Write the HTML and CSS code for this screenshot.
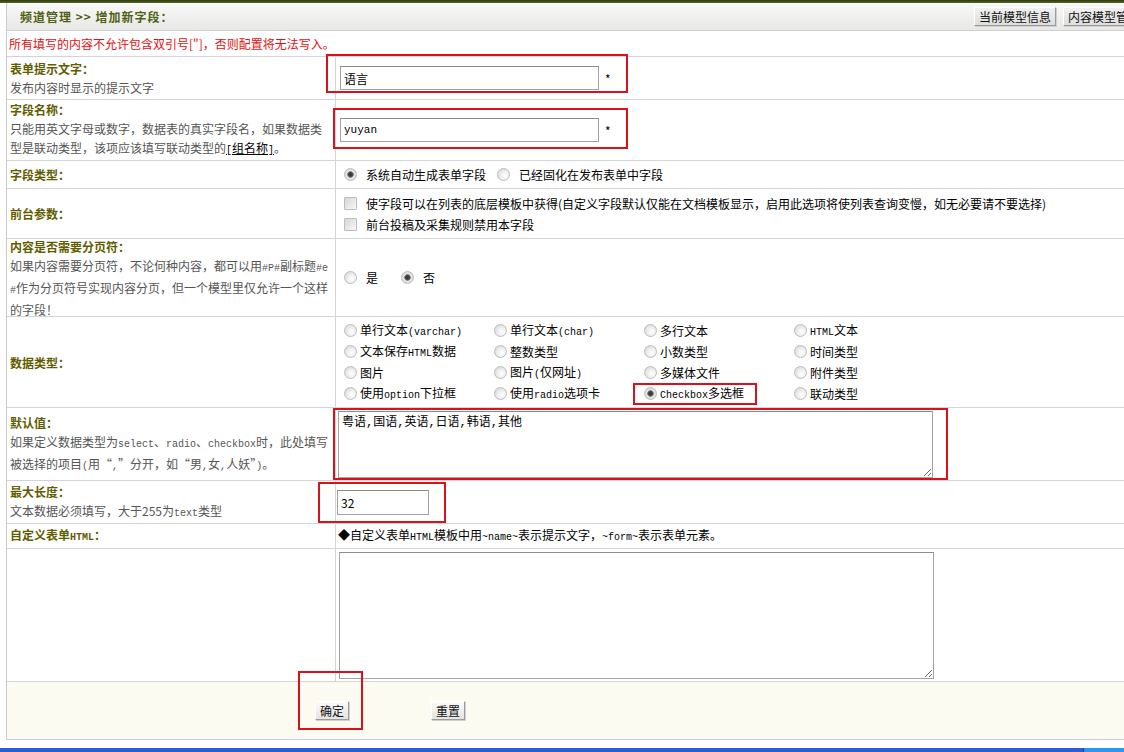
FILE: index.html
```html
<!DOCTYPE html>
<html lang="zh-CN">
<head>
<meta charset="utf-8">
<title>增加新字段</title>
<link rel="stylesheet" href="styles.css">
</head>
<body>
<div class="topbar"></div>
<div class="page">
  <div class="header">
    <div class="title">频道管理 &gt;&gt; 增加新字段：</div>
    <div class="tools">
      <button class="btn tool">当前模型信息</button>
      <button class="btn tool">内容模型管理</button>
    </div>
  </div>
  <div class="notice">所有填写的内容不允许包含双引号["]，否则配置将无法写入。</div>

  <div class="row r1">
    <div class="lc"><div class="lbl">表单提示文字：</div><div class="desc">发布内容时显示的提示文字</div></div>
    <div class="rc"><input class="txt t-name" value="语言"><span class="req">*</span></div>
  </div>

  <div class="row r2">
    <div class="lc"><div class="lbl">字段名称：</div><div class="desc">只能用英文字母或数字，数据表的真实字段名，如果数据类<br>型是联动类型，该项应该填写联动类型的<a class="lnk" href="#"><span class="m">[</span>组名称<span class="m">]</span></a>。</div></div>
    <div class="rc"><input class="txt t-name mono-in" value="yuyan"><span class="req">*</span></div>
  </div>

  <div class="row r3">
    <div class="lc"><div class="lbl">字段类型：</div></div>
    <div class="rc">
      <label class="opt wide"><input type="radio" class="radio" name="ft" checked><span>系统自动生成表单字段</span></label>
      <label class="opt wide second"><input type="radio" class="radio" name="ft"><span>已经固化在发布表单中字段</span></label>
    </div>
  </div>

  <div class="row r4">
    <div class="lc"><div class="lbl">前台参数：</div></div>
    <div class="rc col">
      <label class="chkline"><input type="checkbox" class="chk"><span>使字段可以在列表的底层模板中获得(自定义字段默认仅能在文档模板显示，启用此选项将使列表查询变慢，如无必要请不要选择)</span></label>
      <label class="chkline"><input type="checkbox" class="chk"><span>前台投稿及采集规则禁用本字段</span></label>
    </div>
  </div>

  <div class="row r5">
    <div class="lc"><div class="lbl">内容是否需要分页符：</div><div class="desc">如果内容需要分页符，不论何种内容，都可以用<span class="m">#P#</span>副标题<span class="m">#e</span><br><span class="m">#</span>作为分页符号实现内容分页，但一个模型里仅允许一个这样<br>的字段！</div></div>
    <div class="rc">
      <label class="opt wide"><input type="radio" class="radio" name="pg"><span>是</span></label>
      <label class="opt wide yes"><input type="radio" class="radio" name="pg" checked><span>否</span></label>
    </div>
  </div>

  <div class="row r6">
    <div class="lc"><div class="lbl">数据类型：</div></div>
    <div class="rc">
      <div class="dtypes">
        <label class="opt"><input type="radio" class="radio" name="dt"><span>单行文本<span class="m">(varchar)</span></span></label>
        <label class="opt"><input type="radio" class="radio" name="dt"><span>单行文本<span class="m">(char)</span></span></label>
        <label class="opt"><input type="radio" class="radio" name="dt"><span>多行文本</span></label>
        <label class="opt"><input type="radio" class="radio" name="dt"><span><span class="m">HTML</span>文本</span></label>
        <label class="opt"><input type="radio" class="radio" name="dt"><span>文本保存<span class="m">HTML</span>数据</span></label>
        <label class="opt"><input type="radio" class="radio" name="dt"><span>整数类型</span></label>
        <label class="opt"><input type="radio" class="radio" name="dt"><span>小数类型</span></label>
        <label class="opt"><input type="radio" class="radio" name="dt"><span>时间类型</span></label>
        <label class="opt"><input type="radio" class="radio" name="dt"><span>图片</span></label>
        <label class="opt"><input type="radio" class="radio" name="dt"><span>图片<span class="m">(</span>仅网址<span class="m">)</span></span></label>
        <label class="opt"><input type="radio" class="radio" name="dt"><span>多媒体文件</span></label>
        <label class="opt"><input type="radio" class="radio" name="dt"><span>附件类型</span></label>
        <label class="opt"><input type="radio" class="radio" name="dt"><span>使用<span class="m">option</span>下拉框</span></label>
        <label class="opt"><input type="radio" class="radio" name="dt"><span>使用<span class="m">radio</span>选项卡</span></label>
        <label class="opt"><input type="radio" class="radio" name="dt" checked><span><span class="m">Checkbox</span>多选框</span></label>
        <label class="opt"><input type="radio" class="radio" name="dt"><span>联动类型</span></label>
      </div>
    </div>
  </div>

  <div class="row r7">
    <div class="lc"><div class="lbl">默认值：</div><div class="desc">如果定义数据类型为<span class="m">select</span>、<span class="m">radio</span>、<span class="m">checkbox</span>时，此处填写<br>被选择的项目<span class="m">(</span>用“<span class="m">,</span>”分开，如“男<span class="m">,</span>女<span class="m">,</span>人妖”<span class="m">)</span>。</div></div>
    <div class="rc"><textarea class="area a-def">粤语,国语,英语,日语,韩语,其他</textarea></div>
  </div>

  <div class="row r8">
    <div class="lc"><div class="lbl">最大长度：</div><div class="desc">文本数据必须填写，大于255为<span class="m">text</span>类型</div></div>
    <div class="rc"><input class="txt t-len" value="32"></div>
  </div>

  <div class="row r9">
    <div class="lc"><div class="lbl">自定义表单<span class="mb">HTML</span>：</div></div>
    <div class="rc"><span class="hint">◆自定义表单<span class="m">HTML</span>模板中用<span class="m">~name~</span>表示提示文字，<span class="m">~form~</span>表示表单元素。</span></div>
  </div>

  <div class="row r10">
    <div class="lc"></div>
    <div class="rc"><textarea class="area a-html"></textarea></div>
  </div>

  <div class="footer">
    <button class="btn act">确定</button>
    <button class="btn act reset">重置</button>
  </div>
</div>
<div class="taskbar"></div>

<div class="mark mk1"></div>
<div class="mark mk2"></div>
<div class="mark mk3"></div>
<div class="mark mk4"></div>
<div class="mark mk5"></div>
<div class="mark mk6"></div>
</body>
</html>
```

FILE: styles.css
```css
* { box-sizing: border-box; }
html, body { margin: 0; padding: 0; }
body {
  width: 1124px;
  height: 752px;
  overflow: hidden;
  position: relative;
  background: #fff;
  color: #000;
  font: 12px/19px "Noto Sans CJK SC", "Noto Sans", sans-serif;
}
.m { font-family: "Liberation Mono", monospace; font-size: 10px; }
.mb { font-family: "Liberation Mono", monospace; font-size: 10px; font-weight: bold; }

.topbar { height: 3px; background: linear-gradient(#2c3a0a, #55662a); }

.page { margin-left: 6px; width: 1142px; border-left: 1px solid #cccccc; }

.header {
  height: 28px;
  display: flex;
  align-items: center;
  justify-content: space-between;
  padding: 0 3px 0 13px;
  background: linear-gradient(#f8f8f6, #e8e8e6);
  border-bottom: 1px solid #cfcfcf;
}
.title { font-weight: bold; color: #4f6012; letter-spacing: 1px; }
.tools { display: flex; gap: 7px; }

.btn {
  font: 12px/17px "Noto Sans CJK SC", sans-serif;
  color: #111;
  height: 19px;
  padding: 0;
  background: linear-gradient(#fafafa, #e4e4e2);
  border: 1px solid;
  border-color: #ffffff #9c9c9c #9c9c9c #ffffff;
  box-shadow: 1px 1px 0 #d0d0d0;
}
.tool { width: 82px; background: linear-gradient(#f0f0ee, #dedede); }

.notice {
  height: 26px;
  display: flex;
  align-items: center;
  padding-left: 2px;
  color: #e41010;
  border-bottom: 1px solid #d4d4d4;
}

.row { display: flex; border-bottom: 1px solid #d4d4d4; }
.r1 { height: 43px; }
.r2 { height: 61px; }
.r3 { height: 28px; }
.r4 { height: 50px; }
.r5 { height: 78px; }
.r6 { height: 91px; }
.r7 { height: 73px; }
.r8 { height: 43px; }
.r9 { height: 25px; }
.r10 { height: 133px; }

.lc {
  width: 329px;
  flex: none;
  border-right: 1px solid #d4d4d4;
  padding-left: 3px;
  display: flex;
  flex-direction: column;
  justify-content: center;
}
.lbl { font-weight: bold; color: #5f5d00; }
.desc { color: #555; white-space: nowrap; }
.lnk { color: #000; text-decoration: underline; }

.rc { flex: 1; display: flex; align-items: center; min-width: 0; }
.rc.col { flex-direction: column; align-items: flex-start; justify-content: center; }

.txt {
  font: 12px "Noto Sans CJK SC", sans-serif;
  color: #000;
  padding: 0 3px;
  border: 1px solid #a2a2a2;
  border-top-color: #8a8a8a;
  background: #fff;
  outline: none;
}
.mono-in { font-family: "Liberation Mono", monospace; font-size: 11px; }
.t-name { width: 259px; height: 24px; margin-left: 4px; }
.req { margin-left: 6px; }
.t-len { width: 92px; height: 25px; margin-left: 1px; }

.area {
  font: 12px/16px "Liberation Mono", "Noto Sans CJK SC", monospace;
  color: #000;
  padding: 3px 3px;
  border: 1px solid #a4a4a4;
  border-top-color: #8c8c8c;
  background: #fff;
  resize: both;
  outline: none;
}
.a-def { width: 595px; height: 67px; margin-left: 2px; }
.a-html { width: 595px; height: 127px; margin-left: 3px; }

.hint { margin-left: 2px; }

.opt { display: flex; align-items: center; white-space: nowrap; }
.opt span { margin-left: 3px; }
.opt span span { margin-left: 0; }
.opt.wide { margin-left: 8px; }
.opt.wide > span { margin-left: 9px; }
.opt.second { margin-left: 11px; }
.opt.yes { margin-left: 23px; }

.radio {
  -webkit-appearance: none;
  appearance: none;
  width: 13px;
  height: 13px;
  margin: 0;
  flex: none;
  border-radius: 50%;
  border: 1px solid #bcbcbc;
  background: radial-gradient(circle at 62% 62%, #ffffff 0, #f2f2f2 35%, #d2d2d2 100%);
}
.radio:checked {
  background: radial-gradient(circle, #333 0, #444 2px, #8a8a8a 3px, #e6e6e6 3.6px, #d0d0d0 100%);
}

.chkline { display: flex; align-items: center; height: 21px; margin-left: 8px; white-space: nowrap; }
.chkline span { margin-left: 9px; }
.chk {
  -webkit-appearance: none;
  appearance: none;
  width: 13px;
  height: 13px;
  margin: 0;
  flex: none;
  border: 1px solid #bdbdbd;
  border-radius: 1px;
  background: linear-gradient(135deg, #d6d6d6, #f8f8f8);
}

.dtypes {
  display: grid;
  grid-template-columns: repeat(4, 150px);
  grid-auto-rows: 21px;
  margin-left: 8px;
}

.footer {
  height: 58px;
  display: flex;
  align-items: center;
  padding-left: 308px;
  background: #fbfbf2;
  border-bottom: 1px solid #c6c9df;
}
.act { width: 34px; }
.reset { margin-left: 82px; }

.taskbar {
  margin-top: 8px;
  height: 4px;
  background: linear-gradient(90deg, #2a5ed6 0, #2a5ed6 1083px, #1e3f9a 1083px, #1e3f9a 1084px, #2f96ea 1084px);
}

.mark { position: absolute; border: 2px solid #d8121c; pointer-events: none; }
.mk1 { left: 326px; top: 54px; width: 302px; height: 39px; }
.mk2 { left: 333px; top: 108px; width: 295px; height: 41px; }
.mk3 { left: 633px; top: 383px; width: 124px; height: 22px; }
.mk4 { left: 333px; top: 408px; width: 615px; height: 72px; }
.mk5 { left: 318px; top: 482px; width: 128px; height: 41px; }
.mk6 { left: 298px; top: 671px; width: 65px; height: 59px; }
```
